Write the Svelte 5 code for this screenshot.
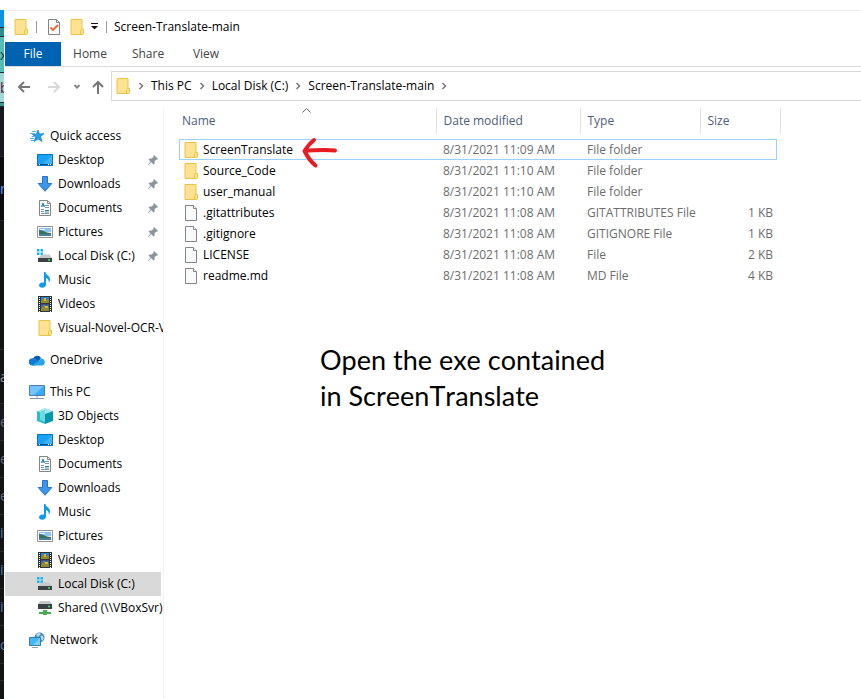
<script>
  const tabs = ['Home', 'Share', 'View'];
  const crumbs = ['This PC', 'Local Disk (C:)', 'Screen-Translate-main'];
  const groups = [
    {
      icon: 'star', label: 'Quick access', items: [
        { icon: 'desktop', label: 'Desktop', pinned: true },
        { icon: 'down', label: 'Downloads', pinned: true },
        { icon: 'doc', label: 'Documents', pinned: true },
        { icon: 'pic', label: 'Pictures', pinned: true },
        { icon: 'disk', label: 'Local Disk (C:)', pinned: true },
        { icon: 'music', label: 'Music' },
        { icon: 'video', label: 'Videos' },
        { icon: 'folder', label: 'Visual-Novel-OCR-VNR' }
      ]
    },
    { icon: 'cloud', label: 'OneDrive', items: [] },
    {
      icon: 'pc', label: 'This PC', items: [
        { icon: 'cube', label: '3D Objects' },
        { icon: 'desktop', label: 'Desktop' },
        { icon: 'doc', label: 'Documents' },
        { icon: 'down', label: 'Downloads' },
        { icon: 'music', label: 'Music' },
        { icon: 'pic', label: 'Pictures' },
        { icon: 'video', label: 'Videos' },
        { icon: 'disk', label: 'Local Disk (C:)', selected: true },
        { icon: 'shared', label: 'Shared (\\\\VBoxSvr)' }
      ]
    },
    { icon: 'network', label: 'Network', items: [] }
  ];
  const files = [
    ['folder', 'ScreenTranslate', '8/31/2021 11:09 AM', 'File folder', ''],
    ['folder', 'Source_Code', '8/31/2021 11:10 AM', 'File folder', ''],
    ['folder', 'user_manual', '8/31/2021 11:10 AM', 'File folder', ''],
    ['file', '.gitattributes', '8/31/2021 11:08 AM', 'GITATTRIBUTES File', '1 KB'],
    ['file', '.gitignore', '8/31/2021 11:08 AM', 'GITIGNORE File', '1 KB'],
    ['file', 'LICENSE', '8/31/2021 11:08 AM', 'File', '2 KB'],
    ['file', 'readme.md', '8/31/2021 11:08 AM', 'MD File', '4 KB']
  ];
  // Rows of the application behind the window: height, background, text, text colour
  const behind = [
    [18, '#0a93e8', '', ''], [9, '#2b8f90', '', ''], [36, '#55bdb8', 'x', '#17343a'],
    [30, '#9fd8d5', 'b', '#601040'], [4, '#3a9a98', '', ''], [50, '#15181d', '', ''],
    [64, '#0b0c0f', 'r', '#4a9cf0'], [129, '#121315', '', ''], [54, '#121315', 'a', '#8e9297'],
    [37, '#161a1f', 'e', '#666b70'], [37, '#121315', 'e', '#666b70'], [37, '#121315', 'e', '#666b70'],
    [37, '#121315', 'it', '#5a7894'], [37, '#121315', 'it', '#5a7894'], [37, '#121315', 'it', '#5a7894'],
    [38, '#121315', 'o', '#5a7894'], [17, '#121315', '', '']
  ];
</script>

{#snippet icon(name)}
  <svg class="icon" viewBox="0 0 16 16" aria-hidden="true">
    {#if name === 'folder'}
      <path d="M2 .5h11v10.5h1v4.5H2z" fill="#ffe391" stroke="#e9c347" />
      <path d="M11.5 15.5v-4l1-1h2v4l-1 1z" fill="#ffe391" stroke="#e9c347" />
    {:else if name === 'file'}
      <path d="M2.500.5h8l3 3v12h-11z" fill="#f7f9fa" stroke="#858585" />
      <path d="M10.500.5v3h3" fill="#fff" stroke="#858585" />
    {:else if name === 'check'}
      <path d="M2.500.5h8l3 3v12h-11z" fill="#f7f9fa" stroke="#858585" />
      <path d="M10.500.5v3h3" fill="none" stroke="#858585" />
      <path d="M4.500 8.500 7 11l5-5" fill="none" stroke="#ed6432" stroke-width="1.800" />
    {:else if name === 'star'}
      <path d="m9 2 1.500 4 4.500-.5-3.500 3.200 1.500 4.800-4-2.500-3.800 2.500 1.300-4.500L3.500 6.500l3.800-.3z" fill="#279fe6" stroke="#137bc2" stroke-width=".7" />
      <path d="M3 3.500h4M1 5.500h5M3 8.500h2M1 10.500h4M2 12.500h3" stroke="#47b8ef" stroke-width="1" />
    {:else if name === 'desktop'}
      <path d="M.5 2.500h15v11H.5z" fill="#1ba1fa" stroke="#0975bf" />
      <path d="M15 3v9H6z" fill="#41b2ff" />
      <path d="M1 12.500h14" stroke="#064f88" /><path d="M2 12.500h1m8 0h1m1 0h1" stroke="#fff" />
    {:else if name === 'down'}
      <path d="M5.500.5h5v7h4.300L8 15.300 1.200 7.500h4.300z" fill="#3d95e5" stroke="#2676c5" />
    {:else if name === 'doc'}
      <path d="M2.500.5h8l3 3v12h-11z" fill="#fff" stroke="#858585" /><path d="M10.500.5v3h3" fill="none" stroke="#858585" />
      <path d="M8 5.500h4M8 7.500h4M4 9.500h3M4 11.500h3M4 13.500h8" stroke="#8096a8" /><path d="m4.500 7 1.500-4 1.500 4m-3-1h3M8 10.500h4" fill="none" stroke="#1782be" /><path d="M8 12h4" stroke="#50a18b" />
    {:else if name === 'pic'}
      <path d="M.5 2.500h15v11H.5z" fill="#fff" stroke="#929292" />
      <path d="M2 4h12v4H2z" fill="#8ec5f0" /><path d="M2 6c5 0 6 3 12 3v3H2z" fill="#3b705d" /><path d="M2 10h12v2H2z" fill="#477fa1" /><path d="M3 5h5v1H3z" fill="#e2f3ff" />
    {:else if name === 'disk'}
      <path d="M0 1h2.500v2.500H0zM3.500 1H6v2.500H3.500zM0 4.500h2.500V7H0zM3.500 4.500H6V7H3.500z" fill="#08b9f5" />
      <path d="m3 8 1.500-1.500h8L15 10H1z" fill="#c6c9cc" /><path d="M1 10h14v4H1z" fill="#3c4145" /><path d="M11 12h2" stroke="#38ee59" stroke-width="1.500" />
    {:else if name === 'music'}
      <path d="M7 0h1.500c.4 3.300 4.500 3.300 4.500 7.500 0 1.300-.5 2.400-1.400 3.300.7-3-1-4.200-2.600-4.800v6.500c0 2-1.600 3.200-3.700 3.200C3.400 15.700 2 14.800 2 13.200c0-1.900 2.400-3.200 5-2.600z" fill="#109bea" />
    {:else if name === 'video'}
      <path d="M1 0h14v16H1z" fill="#30343a" /><path d="M4 1h8v6H4z" fill="#2988d2" /><path d="M4 8.500h8V15H4z" fill="#386dbd" />
      <path d="M4 5c2-4 4 1 8-2v4H4zM4 13l3-4 5 3v3H4z" fill="#8c8c35" /><path d="M7 2h2v3H7zM8 10h3v2H8z" fill="#e5ae33" />
      <path d="M2.500 1v15M13.500 1v15" stroke="#fff" stroke-dasharray="1 1" />
    {:else if name === 'cloud'}
      <path d="M4 7a4.300 4.300 0 0 1 8-1l-3 4-6 2z" fill="#0759ae" /><path d="M3.500 6.200c1.500-.3 3 .3 4 1L11 9l-5 4.500H3.300A3.500 3.500 0 0 1 3.500 6.200z" fill="#117bd3" /><path d="M11.500 6.500a3.500 3.500 0 0 1 4.200 4 3 3 0 0 1-2.700 3H3L11 8z" fill="#25a4e7" />
    {:else if name === 'pc'}
      <path d="M.5 1.500h15v10H.5z" fill="#71c4ff" stroke="#4d7fa4" /><path d="M15 2v9H5z" fill="#36abf9" /><path d="M7 12h2v2H7z" fill="#c7d6e1" /><path d="M1 14.500h14" stroke="#8399aa" />
    {:else if name === 'cube'}
      <path d="m0 3 8-3 8 3-8 3z" fill="#9de9ed" /><path d="m0 3 8 3v10l-8-3z" fill="#28bdc9" /><path d="m16 3-8 3v10l8-3z" fill="#0797af" /><path d="m3 4 5-2v12l-5-2z" fill="#69dce1" />
    {:else if name === 'shared'}
      <path d="m3 1-2 3h14l-2-3z" fill="#c6c9cc" /><path d="M1 4h14v5H1z" fill="#3c4145" /><path d="M11 6.500h2" stroke="#38ee59" stroke-width="1.500" /><path d="M6 10h4v2h4v2h-4v1H6v-1H2v-2h4z" fill="#48ae54" />
    {:else if name === 'network'}
      <circle cx="10.500" cy="5.500" r="5" fill="#3988b5" /><path d="M7 3c2-3 4-2 5-1L9 5zm6 0 2 3-2 3-2-4z" fill="#b5d9e7" /><path d="M.5 5.500h11v8H.5z" fill="#45b5f7" stroke="#347fad" /><path d="M11 6v7H4z" fill="#7ccdff" /><path d="M3 15.500h6" stroke="#91a4b2" />
    {/if}
  </svg>
{/snippet}

{#snippet chevron()}
  <svg class="chevron" viewBox="0 0 6 8" aria-hidden="true"><path d="m1.500 1 3 3-3 3" /></svg>
{/snippet}

<div class="screen">
  <div class="behind" aria-hidden="true">
    {#each behind as [h, bg, text, color]}
      <div style:height="{h}px" style:background={bg} style:color={color}>{text}</div>
    {/each}
  </div>
  <div class="window">
    <header class="titlebar">
      {@render icon('folder')}
      <span class="rule"></span>
      <button class="properties" aria-label="Properties">{@render icon('check')}</button>
      <button class="new" aria-label="New folder">{@render icon('folder')}</button>
      <button class="customize" aria-label="Customize toolbar"><svg width="7" height="7" viewBox="0 0 7 7"><path d="M0 .5h7" stroke="#111" /><path d="M0 3h7L3.500 6.500z" fill="#111" /></svg></button>
      <span class="rule"></span>
      <h1>Screen-Translate-main</h1>
    </header>
    <nav class="tabs" aria-label="Ribbon">
      <button class="active">File</button>
      {#each tabs as tab}<button>{tab}</button>{/each}
    </nav>
    <div class="address">
      <div class="history">
        <button aria-label="Back"><svg width="14" height="14" viewBox="0 0 14 14"><path d="M13 7H2m5-5L2 7l5 5" stroke="#777" /></svg></button>
        <button aria-label="Forward" disabled><svg width="14" height="14" viewBox="0 0 14 14"><path d="M1 7h11M7 2l5 5-5 5" stroke="#d8d8d8" /></svg></button>
        <button class="recent" aria-label="Recent"><svg width="6" height="14" viewBox="0 0 6 14"><path d="m.5 5 2.500 2.500L5.500 5" stroke="#888" /></svg></button>
        <button class="up" aria-label="Up"><svg width="14" height="14" viewBox="0 0 14 14"><path d="M7 14V2M2 7l5-5 5 5" stroke="#777" /></svg></button>
      </div>
      <div class="path">
        {@render icon('folder')}
        {@render chevron()}
        {#each crumbs as crumb}
          <a href="#top">{crumb}</a>
          {@render chevron()}
        {/each}
      </div>
    </div>
    <div class="content">
      <nav class="tree" aria-label="Folders">
        {#each groups as group}
          <section>
            <a href="#top" class="node">{@render icon(group.icon)}<span>{group.label}</span></a>
            {#each group.items as item}
              <a href="#top" class="node child" class:selected={item.selected}>
                {@render icon(item.icon)}<span>{item.label}</span>
                {#if item.pinned}
                  <svg class="pin" viewBox="0 0 10 10" aria-hidden="true"><path d="m6 0 4 4-1 .8-.8-.3-1.700 1.900.2 2L5.500 9.500 3.300 7.300.5 10 0 9.500l2.700-2.800L.5 4.500l1.200-1 2 .1 1.900-1.800-.4-.9z" /></svg>
                {/if}
              </a>
            {/each}
          </section>
        {/each}
      </nav>
      <main>
        <table>
          <thead>
            <tr>
              <th class="name">Name<svg class="sort" viewBox="0 0 9 5" aria-hidden="true"><path d="m.5 4.500 4-4 4 4" /></svg></th>
              <th class="date">Date modified</th>
              <th class="type">Type</th>
              <th class="size">Size</th>
            </tr>
          </thead>
          <tbody>
            {#each files as [kind, name, date, type, size], i}
              <tr class:focused={i === 0}>
                <td><div class="file">{@render icon(kind)}<span>{name}</span>
                  {#if i === 0}
                    <svg class="arrow" viewBox="0 0 36 32" aria-hidden="true"><path d="M33 13.500C23 12 12 13.500 3 13.500M12 3C8 6 5 10 2.500 14 5 19 8 24 13.500 28.500" /></svg>
                  {/if}
                </div></td>
                <td>{date}</td>
                <td>{type}</td>
                <td>{size}</td>
              </tr>
            {/each}
          </tbody>
        </table>
        <p class="note">Open the exe contained<br />in ScreenTranslate</p>
      </main>
    </div>
  </div>
</div>

<style>
  :global(body) { background: #fff; }
  .screen {
    display: flex;
    min-height: 100vh;
    padding-top: 10px;
    box-sizing: border-box;
    font: 12px/16px "Open Sans", "Noto Sans", sans-serif;
    color: #000;
    overflow: hidden;
  }
  .behind { width: 4px; flex: none; height: calc(100vh - 10px); overflow: hidden; background: #121315; }
  .behind div { display: flex; align-items: center; font-size: 14px; overflow: hidden; box-sizing: border-box; border-bottom: 1px solid #252a2f; }
  .window { flex: 1; min-width: 0; display: flex; flex-direction: column; border-top: 1px solid #ececec; padding-left: 1px; }
  button { border: 0; padding: 0; background: none; font: inherit; color: inherit; display: flex; align-items: center; justify-content: center; }
  a { color: inherit; text-decoration: none; }
  .icon { width: 16px; height: 16px; flex: none; }
  .titlebar { display: flex; align-items: center; height: 31px; padding-left: 8px; }
  .titlebar .rule { width: 1px; height: 12px; background: #999; margin: 0 7px; }
  .titlebar .properties { margin-left: 2px; }
  .titlebar .new { margin-left: 7px; }
  .titlebar .customize { width: 9px; margin-left: 5px; }
  .titlebar h1 { font-size: 12px; font-weight: 400; margin: 0; }
  .tabs { display: flex; height: 24px; border-bottom: 1px solid #dadbdc; }
  .tabs button { width: 58px; color: #444; }
  .tabs .active { width: 56px; background: #0063b1; color: #fff; }
  .address { display: flex; height: 36px; padding-top: 4px; box-sizing: border-box; }
  .history { display: flex; align-items: center; gap: 10px; width: 106px; padding-left: 9px; box-sizing: border-box; flex: none; }
  .history button { width: 20px; }
  .history .recent { width: 6px; }
  .history .up { width: 16px; }
  .history svg { fill: none; stroke-width: 2; }
  .path { flex: 1; display: flex; align-items: center; border: 1px solid #d9d9d9; border-right: 0; height: 30px; box-sizing: border-box; padding-left: 3px; }
  .chevron { width: 6px; height: 8px; margin: 0 7px; flex: none; fill: none; stroke: #777; stroke-width: 1.500; }
  .content { flex: 1; display: flex; padding-top: 5px; }
  .tree { width: 156px; flex: none; padding: 16px 2px 0 0; border-right: 1px solid #f3f3f3; overflow: hidden; }
  .tree section { margin-bottom: 8px; }
  .node { display: flex; align-items: center; height: 24px; padding-left: 24px; gap: 5px; white-space: nowrap; }
  .node.child { padding-left: 32px; }
  .node.selected { background: #d9d9d9; }
  .pin { width: 10px; height: 10px; margin: 0 3px 0 auto; fill: #89949e; flex: none; }
  main { flex: 1; min-width: 0; padding-left: 15px; }
  table { border-collapse: collapse; table-layout: fixed; width: 598px; }
  th { position: relative; height: 26px; box-sizing: border-box; padding: 0 0 0 7px; text-align: left; font-weight: 400; color: #4c607a; border-right: 1px solid #e3e3e3; }
  th.name { width: 257px; padding-left: 3px; }
  th.date { width: 144px; }
  th.type { width: 120px; }
  th.size { border-right: 0; }
  th.size::after { content: ""; position: absolute; top: 0; bottom: 0; right: -4px; width: 1px; background: #e3e3e3; }
  .sort { position: absolute; top: 0; left: 123px; width: 9px; height: 5px; fill: none; stroke: #666; }
  tbody::before { content: ""; display: block; height: 5px; }
  td { height: 21px; padding: 0 0 0 7px; color: #6d6d6d; white-space: nowrap; }
  td:first-child { padding-left: 4px; color: #000; }
  td:last-child { text-align: right; padding-right: 4px; }
  .focused { outline: 1px solid #99d1ff; outline-offset: -1px; }
  .file { position: relative; display: flex; align-items: center; gap: 4px; }
  .arrow { position: absolute; left: 119px; top: -5px; width: 36px; height: 32px; fill: none; stroke: #e81c23; stroke-width: 4; stroke-linecap: round; stroke-linejoin: round; }
  .note { font: 27px/36px Lato, sans-serif; font-kerning: none; margin: 56px 0 0 141px; }
</style>
